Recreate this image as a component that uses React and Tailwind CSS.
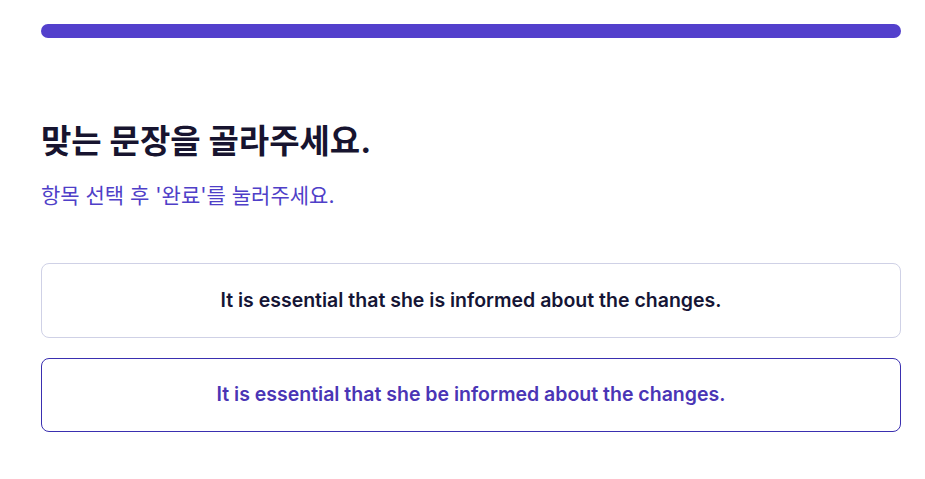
import React from "react";

const options = [
  { text: "It is essential that she is informed about the changes.", selected: false },
  { text: "It is essential that she be informed about the changes.", selected: true },
];

export default function App() {
  return (
    <div
      className="min-h-[479px] bg-white pl-[41px] pr-[24px] pt-[24px]"
      style={{ fontFamily: "Inter, 'Noto Sans CJK KR', sans-serif" }}
    >
      {/* progress bar */}
      <div className="h-[14px] w-full rounded-full bg-[#5340cc]" />

      <h1 className="mt-[82px] text-[33px] font-bold leading-[42px] text-[#17142f]">
        맞는 문장을 골라주세요.
      </h1>
      <p className="mt-[20px] text-[21px] leading-[28px] text-[#4f3fc8]">
        항목 선택 후 '완료'를 눌러주세요.
      </p>

      <div className="mt-[53px] flex flex-col gap-[20px]">
        {options.map((o) => (
          <button
            key={o.text}
            className={
              o.selected
                ? "flex h-[74px] w-full items-center justify-center rounded-[8px] border border-[#3a2fb0] bg-white text-[19.5px] font-semibold text-[#4a35b5]"
                : "flex h-[75px] w-full items-center justify-center rounded-[8px] border border-[#cfd1e6] bg-white text-[19.5px] font-semibold text-[#151535]"
            }
          >
            {o.text}
          </button>
        ))}
      </div>
    </div>
  );
}
